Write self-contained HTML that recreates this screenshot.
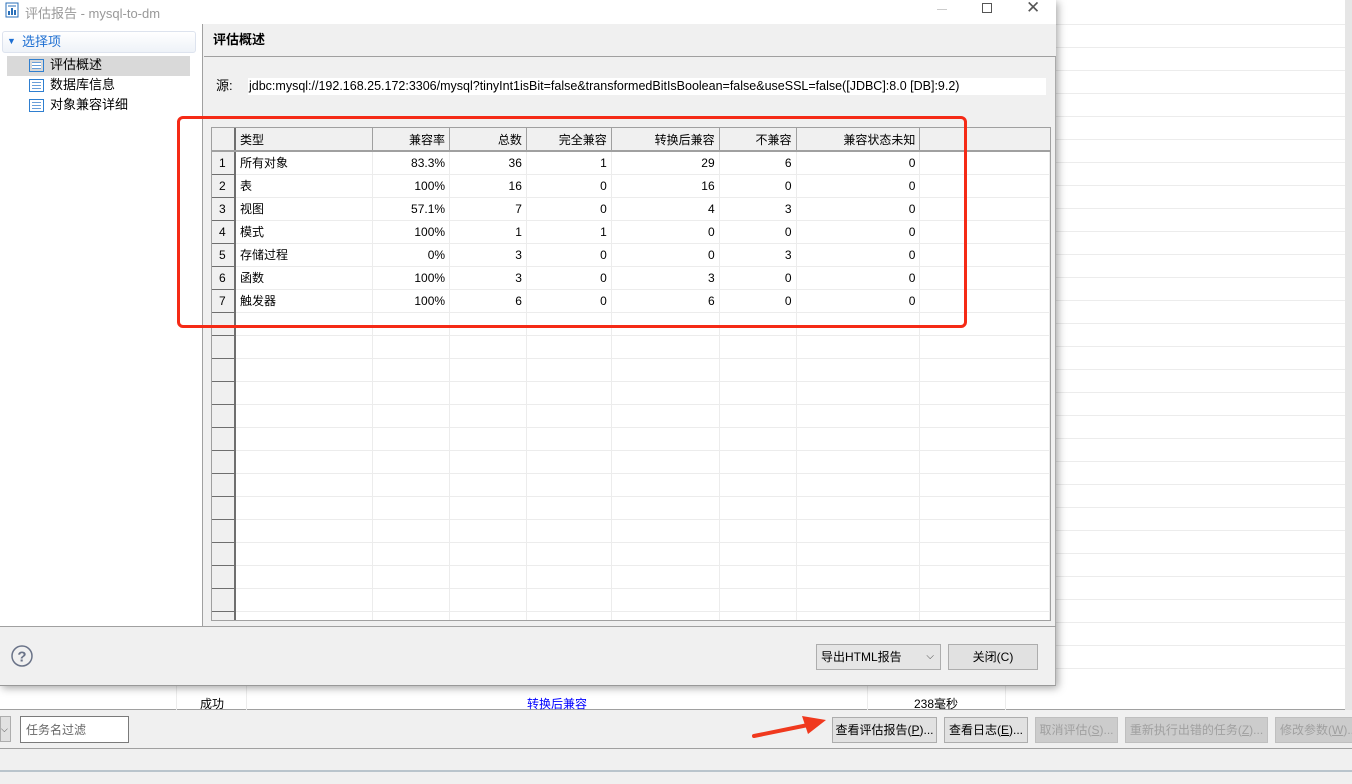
<!DOCTYPE html>
<html><head><meta charset="utf-8"><style>
*{box-sizing:border-box;margin:0;padding:0}
body{width:1352px;height:784px;overflow:hidden;background:#f0f0f0;font-family:"Liberation Sans","Noto Sans CJK SC",sans-serif;font-size:12px;color:#000;position:relative}
.a{position:absolute;white-space:nowrap}
.bgrows{left:0;top:0;width:1345px;height:710px;background:#fff;background-image:repeating-linear-gradient(to bottom,#fff 0,#fff 22px,#ececec 22px,#ececec 23px);background-position:0 2px}
.dlg{left:0;top:0;width:1056px;height:686px;background:#f0f0f0;box-shadow:2px 2px 8px rgba(0,0,0,.35);border-right:1px solid #aaa;border-bottom:1px solid #999}
table{border-collapse:collapse;table-layout:fixed;position:absolute;left:212px;top:128px}
td{height:23px;border-right:1px solid #ececec;border-bottom:1px solid #ececec;padding:0 4px;white-space:nowrap;overflow:hidden;font-size:12px}
td.n{background:#f0f0f0;border-right:2px solid #6f6f6f;border-bottom:1px solid #6f6f6f;text-align:left;padding-left:7px}
tr.h td{background:#f0f0f0;border-right:1px solid #a0a0a0;border-bottom:2px solid #a0a0a0}
tr.h td:last-child{border-right:none}
.r{text-align:right}
.btn{position:absolute;height:26px;border:1px solid #adadad;background:#e1e1e1;text-align:center;line-height:24px;font-size:12px;white-space:nowrap;overflow:hidden}
.dis{color:#a0a0a0;background:#ccc;border-color:#bfbfbf}
.it{font-size:13px;line-height:16px}
</style></head><body>
<div class="a bgrows"></div>
<div class="a" style="left:1345px;top:0;width:7px;height:710px;background:#e6e6e6"></div>
<div class="a" style="left:0;top:686px;width:1345px;height:24px;background:#fff;border-bottom:1px solid #a0a0a0"></div>
<div class="a" style="left:176px;top:686px;width:1px;height:24px;background:#ececec"></div>
<div class="a" style="left:246px;top:686px;width:1px;height:24px;background:#ececec"></div>
<div class="a" style="left:867px;top:686px;width:1px;height:24px;background:#ececec"></div>
<div class="a" style="left:1005px;top:686px;width:1px;height:24px;background:#ececec"></div>
<div class="a" style="left:200px;top:695px">成功</div>
<div class="a" style="left:527px;top:695px;color:#0000ff">转换后兼容</div>
<div class="a" style="left:914px;top:695px">238毫秒</div>
<div class="a" style="left:0;top:716px;width:11px;height:26px;border:1px solid #adadad;background:#e1e1e1;font-size:9px;line-height:24px;color:#444">⌵</div>
<div class="a" style="left:20px;top:716px;width:109px;height:27px;border:1px solid #7a7a7a;background:#fff;color:#666;padding:4px 5px">任务名过滤</div>
<div class="btn" style="left:832px;top:717px;width:105px">查看评估报告(<u>P</u>)...</div>
<div class="btn" style="left:944px;top:717px;width:84px">查看日志(<u>E</u>)...</div>
<div class="btn dis" style="left:1035px;top:717px;width:83px">取消评估(<u>S</u>)...</div>
<div class="btn dis" style="left:1125px;top:717px;width:143px">重新执行出错的任务(<u>Z</u>)...</div>
<div class="btn dis" style="left:1275px;top:717px;width:80px;text-align:left;padding-left:4px">修改参数(<u>W</u>)...</div>
<div class="a" style="left:0;top:748px;width:1352px;height:1px;background:#a0a0a0"></div>
<div class="a" style="left:0;top:770px;width:1352px;height:2px;background:#b9c4cc"></div>
<svg class="a" style="left:750px;top:712px" width="80" height="30"><path d="M4 24 L58 13" stroke="#f0391e" stroke-width="4" stroke-linecap="round"/><path d="M76 8 L52 4 L58 22 Z" fill="#f0391e"/></svg>

<div class="a dlg">
 <div class="a" style="left:0;top:0;width:1056px;height:24px;background:#fff"></div>
 <svg class="a" style="left:5px;top:2px" width="14" height="16"><rect x="1" y="1" width="12" height="14" fill="#fff" stroke="#2a6fb8"/><rect x="3" y="9" width="2" height="4" fill="#2a6fb8"/><rect x="6" y="6" width="2" height="7" fill="#2a6fb8"/><rect x="9" y="8" width="2" height="5" fill="#2a6fb8"/><path d="M3 4h8" stroke="#2a6fb8"/></svg>
 <div class="a" style="left:25px;top:3px;color:#999;font-size:13px">评估报告 - mysql-to-dm</div>
 <div class="a" style="left:937px;top:9px;width:10px;height:1px;background:#ccc"></div>
 <div class="a" style="left:982px;top:3px;width:10px;height:10px;border:1px solid #555"></div>
 <div class="a" style="left:1026px;top:-2px;font-size:17px;color:#555">✕</div>
 <div class="a" style="left:0;top:24px;width:203px;height:602px;background:#fff;border-right:1px solid #a0a0a0"></div>
 <div class="a" style="left:2px;top:31px;width:194px;height:22px;background:linear-gradient(#fff,#eef2f8);border:1px solid #dde3ee;border-radius:3px"></div>
 <div class="a" style="left:7px;top:36px;color:#1e6fd2;font-size:9px">▼</div>
 <div class="a it" style="left:22px;top:34px;color:#1e6fd2">选择项</div>
 <div class="a" style="left:7px;top:56px;width:183px;height:20px;background:#d9d9d9"></div>
 <div class="a" style="left:29px;top:59px;width:15px;height:13px;border:1px solid #2f7fd0;background:repeating-linear-gradient(#fff 0 2px,#6a9fd8 2px 3px);background-clip:content-box;padding:2px"></div>
 <div class="a it" style="left:50px;top:57px">评估概述</div>
 <div class="a" style="left:29px;top:79px;width:15px;height:13px;border:1px solid #2f7fd0;background:repeating-linear-gradient(#fff 0 2px,#6a9fd8 2px 3px);background-clip:content-box;padding:2px"></div>
 <div class="a it" style="left:50px;top:77px">数据库信息</div>
 <div class="a" style="left:29px;top:99px;width:15px;height:13px;border:1px solid #2f7fd0;background:repeating-linear-gradient(#fff 0 2px,#6a9fd8 2px 3px);background-clip:content-box;padding:2px"></div>
 <div class="a it" style="left:50px;top:97px">对象兼容详细</div>
 <div class="a" style="left:204px;top:24px;width:852px;height:33px;background:#f0f0f0;border-bottom:1px solid #a0a0a0"></div>
 <div class="a" style="left:213px;top:32px;font-weight:bold;font-size:13px;line-height:16px">评估概述</div>
 <div class="a" style="left:216px;top:78px;font-size:13px;line-height:16px">源:</div>
 <div class="a" style="left:248px;top:78px;width:798px;height:17px;background:#fff;padding-left:1px;font-size:12.5px;line-height:17px">jdbc:mysql://192.168.25.172:3306/mysql?tinyInt1isBit=false&amp;transformedBitIsBoolean=false&amp;useSSL=false([JDBC]:8.0 [DB]:9.2)</div>
 <div class="a" style="left:211px;top:127px;width:840px;height:494px;border:1px solid #a0a0a0;background:#fff;overflow:hidden"></div>
 <div class="a" style="left:212px;top:128px;width:838px;height:492px;overflow:hidden">
 <table style="left:0;top:0">
 <colgroup><col style="width:23px"><col style="width:138px"><col style="width:77px"><col style="width:77px"><col style="width:85px"><col style="width:108px"><col style="width:77px"><col style="width:124px"><col style="width:130px"></colgroup>
 <tr class="h"><td style="border-right:2px solid #6f6f6f"></td><td>类型</td><td class="r">兼容率</td><td class="r">总数</td><td class="r">完全兼容</td><td class="r">转换后兼容</td><td class="r">不兼容</td><td class="r">兼容状态未知</td><td></td></tr>
 <tr><td class="n">1</td><td>所有对象</td><td class="r">83.3%</td><td class="r">36</td><td class="r">1</td><td class="r">29</td><td class="r">6</td><td class="r">0</td><td></td></tr>
 <tr><td class="n">2</td><td>表</td><td class="r">100%</td><td class="r">16</td><td class="r">0</td><td class="r">16</td><td class="r">0</td><td class="r">0</td><td></td></tr>
 <tr><td class="n">3</td><td>视图</td><td class="r">57.1%</td><td class="r">7</td><td class="r">0</td><td class="r">4</td><td class="r">3</td><td class="r">0</td><td></td></tr>
 <tr><td class="n">4</td><td>模式</td><td class="r">100%</td><td class="r">1</td><td class="r">1</td><td class="r">0</td><td class="r">0</td><td class="r">0</td><td></td></tr>
 <tr><td class="n">5</td><td>存储过程</td><td class="r">0%</td><td class="r">3</td><td class="r">0</td><td class="r">0</td><td class="r">3</td><td class="r">0</td><td></td></tr>
 <tr><td class="n">6</td><td>函数</td><td class="r">100%</td><td class="r">3</td><td class="r">0</td><td class="r">3</td><td class="r">0</td><td class="r">0</td><td></td></tr>
 <tr><td class="n">7</td><td>触发器</td><td class="r">100%</td><td class="r">6</td><td class="r">0</td><td class="r">6</td><td class="r">0</td><td class="r">0</td><td></td></tr>
 <tr><td class="n"></td><td></td><td></td><td></td><td></td><td></td><td></td><td></td><td></td></tr>
 <tr><td class="n"></td><td></td><td></td><td></td><td></td><td></td><td></td><td></td><td></td></tr>
 <tr><td class="n"></td><td></td><td></td><td></td><td></td><td></td><td></td><td></td><td></td></tr>
 <tr><td class="n"></td><td></td><td></td><td></td><td></td><td></td><td></td><td></td><td></td></tr>
 <tr><td class="n"></td><td></td><td></td><td></td><td></td><td></td><td></td><td></td><td></td></tr>
 <tr><td class="n"></td><td></td><td></td><td></td><td></td><td></td><td></td><td></td><td></td></tr>
 <tr><td class="n"></td><td></td><td></td><td></td><td></td><td></td><td></td><td></td><td></td></tr>
 <tr><td class="n"></td><td></td><td></td><td></td><td></td><td></td><td></td><td></td><td></td></tr>
 <tr><td class="n"></td><td></td><td></td><td></td><td></td><td></td><td></td><td></td><td></td></tr>
 <tr><td class="n"></td><td></td><td></td><td></td><td></td><td></td><td></td><td></td><td></td></tr>
 <tr><td class="n"></td><td></td><td></td><td></td><td></td><td></td><td></td><td></td><td></td></tr>
 <tr><td class="n"></td><td></td><td></td><td></td><td></td><td></td><td></td><td></td><td></td></tr>
 <tr><td class="n"></td><td></td><td></td><td></td><td></td><td></td><td></td><td></td><td></td></tr>
 <tr><td class="n"></td><td></td><td></td><td></td><td></td><td></td><td></td><td></td><td></td></tr>
 </table>
 </div>
 <div class="a" style="left:0;top:626px;width:1056px;height:1px;background:#a0a0a0"></div>
 <svg class="a" style="left:10px;top:644px" width="24" height="24"><circle cx="12" cy="12" r="10" fill="none" stroke="#6a7388" stroke-width="1.5"/><text x="12" y="17.5" text-anchor="middle" font-family="Liberation Sans" font-weight="bold" font-size="15" fill="#6a7388">?</text></svg>
 <div class="btn" style="left:816px;top:644px;width:125px;text-align:left;padding-left:4px;background:#e5e5e5">导出HTML报告<span style="position:absolute;right:6px;font-size:10px;color:#444">⌵</span></div>
 <div class="btn" style="left:948px;top:644px;width:90px">关闭(C)</div>
</div>
<div class="a" style="left:177px;top:116px;width:790px;height:212px;border:3px solid #f52a16;border-radius:6px"></div>
</body></html>
